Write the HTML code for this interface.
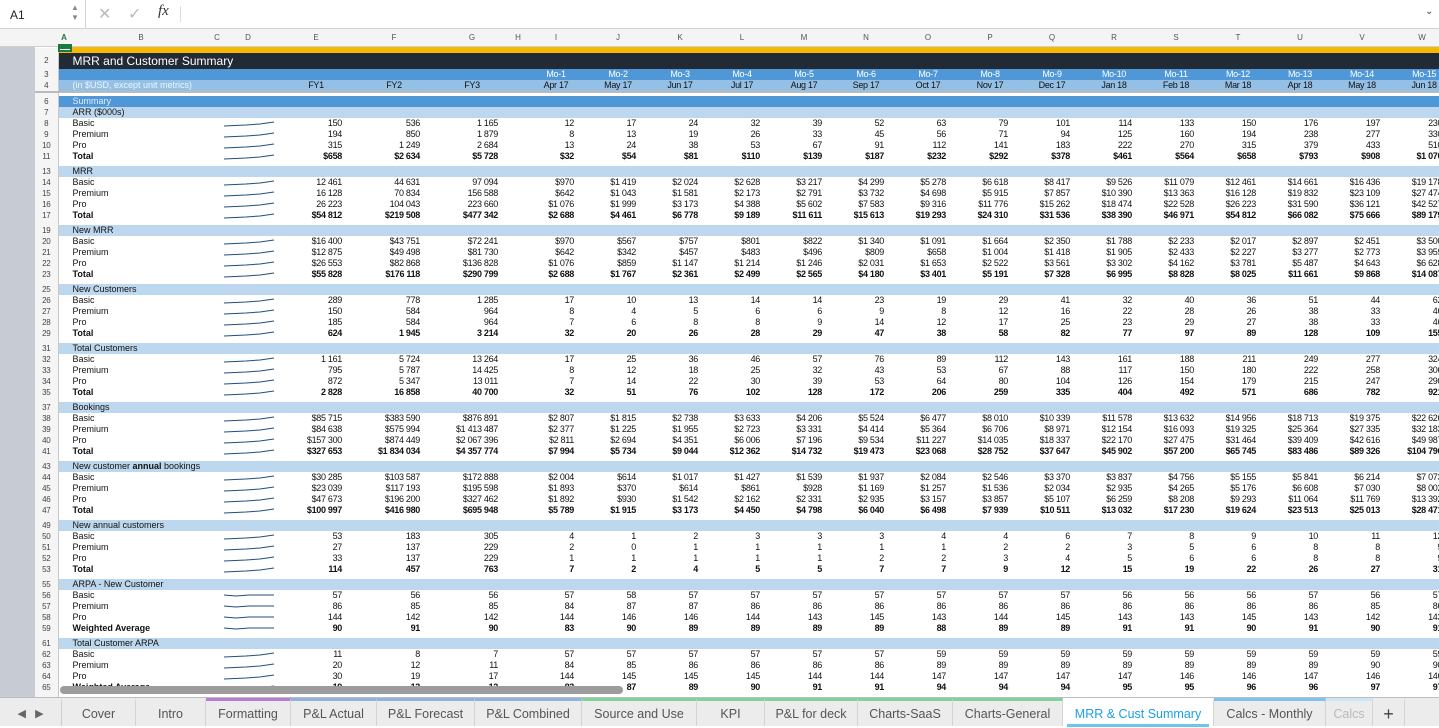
<!DOCTYPE html>
<html><head><meta charset="utf-8"><style>
*{margin:0;padding:0;box-sizing:border-box}
body{width:1439px;height:726px;overflow:hidden;background:#fff;font-family:"Liberation Sans",sans-serif;position:relative}
#fb{position:absolute;left:0;top:0;width:1439px;height:29px;background:#fff;border-bottom:1px solid #d4d4d4}
#nb{position:absolute;left:0;top:0;width:86px;height:28px;border-right:1px solid #d4d4d4;font-size:12px;padding:8px 0 0 10px;color:#222}
#ch{position:absolute;left:0;top:29px;width:1439px;height:18px;background:#f4f4f4;border-bottom:1px solid #d0d0d0}
#ch span{position:absolute;top:4px;font-size:8px;color:#555;transform:translateX(-50%)}
#out{position:absolute;left:0;top:29px;width:35px;height:669px;background:#c6cbd4}
#grid{position:absolute;left:35px;top:47px;width:1404px;height:651px;overflow:hidden}
table{border-collapse:collapse;table-layout:fixed;width:1420px}
td,th{padding:0;font-size:9px;line-height:11px;height:11px;white-space:nowrap;overflow:visible;color:#111;letter-spacing:-.3px}
th{background:#f5f5f5;border-right:1px solid #c8c8c8;font-weight:normal;color:#444;text-align:center;font-size:8px;overflow:hidden}
td{text-align:right;padding-right:13px}
td.l{text-align:left;padding-left:14px;padding-right:0;letter-spacing:0}
tr.t td{font-weight:bold}
tr.s td{background:#bdd7ee}
tr.g td,tr.g th{height:4px;line-height:4px;font-size:0}
svg.sp{width:50px;height:9px;margin-left:-6px;display:block;fill:none;stroke:#1f4e79;stroke-width:1}
#tabs{position:absolute;left:0;top:697px;width:1439px;height:29px;background:#ececec;border-top:1px solid #bdbdbd}
#tabs div{position:absolute;top:0;height:28px;font-size:12.5px;color:#555;text-align:center;line-height:27px;border-right:1px solid #d4d4d4;border-top:3px solid transparent}
</style></head><body>
<div id="fb"><div id="nb">A1</div>
<span style="position:absolute;left:71px;top:3px;font-size:8px;color:#888;line-height:10px">▲<br>▼</span>
<span style="position:absolute;left:98px;top:4px;font-size:16px;color:#bbb">✕</span>
<span style="position:absolute;left:128px;top:4px;font-size:16px;color:#bbb">✓</span>
<span style="position:absolute;left:158px;top:3px;font-size:15px;color:#333;font-style:italic;font-family:'Liberation Serif',serif">fx</span>
<span style="position:absolute;left:180px;top:6px;width:1px;height:16px;background:#ddd"></span>
<span style="position:absolute;left:1425px;top:6px;font-size:10px;color:#444">⌄</span></div>
<div id="out"><span style="position:absolute;left:3px;top:4px;font-size:8px;background:#eee;border:1px solid #999;padding:0 1px;letter-spacing:1px;color:#222">1 2 3</span></div>
<div id="ch">
<span style="left:64px;color:#1b7a3e;font-weight:bold">A</span><span style="left:141px">B</span><span style="left:217px">C</span><span style="left:248px">D</span><span style="left:316px">E</span><span style="left:394px">F</span><span style="left:472px">G</span><span style="left:518px">H</span><span style="left:556px">I</span><span style="left:618px">J</span><span style="left:680px">K</span><span style="left:742px">L</span><span style="left:804px">M</span><span style="left:866px">N</span><span style="left:928px">O</span><span style="left:990px">P</span><span style="left:1052px">Q</span><span style="left:1114px">R</span><span style="left:1176px">S</span><span style="left:1238px">T</span><span style="left:1300px">U</span><span style="left:1362px">V</span><span style="left:1422px">W</span>
<i style="position:absolute;left:58px;top:15px;width:14px;height:3px;background:#1b7a3e"></i>
</div>
<div id="grid"><table>
<colgroup><col style="width:23px"><col style="width:14px"><col style="width:137px"><col style="width:21px"><col style="width:47px"><col style="width:78px"><col style="width:78px"><col style="width:78px"><col style="width:14px"><col span="15" style="width:62px"></colgroup>
<tr style="height:5px"><th style="height:5px"></th><td colspan="23" style="height:5px;background:#f6b800;border-top:1px solid #f6b800"></td></tr>
<tr><th style="height:16px">2</th><td class="l" colspan="23" style="height:16px;background:#222a35;color:#fff;font-size:12px;line-height:16px">MRR and Customer Summary</td></tr>
<tr style="background:#4f97d7"><th style="background:#f5f5f5">3</th><td colspan="8"></td><td style="text-align:center;padding:0;color:#fff">Mo-1</td><td style="text-align:center;padding:0;color:#fff">Mo-2</td><td style="text-align:center;padding:0;color:#fff">Mo-3</td><td style="text-align:center;padding:0;color:#fff">Mo-4</td><td style="text-align:center;padding:0;color:#fff">Mo-5</td><td style="text-align:center;padding:0;color:#fff">Mo-6</td><td style="text-align:center;padding:0;color:#fff">Mo-7</td><td style="text-align:center;padding:0;color:#fff">Mo-8</td><td style="text-align:center;padding:0;color:#fff">Mo-9</td><td style="text-align:center;padding:0;color:#fff">Mo-10</td><td style="text-align:center;padding:0;color:#fff">Mo-11</td><td style="text-align:center;padding:0;color:#fff">Mo-12</td><td style="text-align:center;padding:0;color:#fff">Mo-13</td><td style="text-align:center;padding:0;color:#fff">Mo-14</td><td style="text-align:center;padding:0;color:#fff">Mo-15</td></tr>
<tr style="background:#95c0e6;border-bottom:2px solid #bbb"><th style="background:#f5f5f5;height:12px">4</th><td class="l" colspan="3" style="color:#eef5fc;height:12px">(in $USD, except unit metrics)</td><td></td><td style="text-align:center;padding:0">FY1</td><td style="text-align:center;padding:0">FY2</td><td style="text-align:center;padding:0">FY3</td><td></td><td style="text-align:center;padding:0">Apr 17</td><td style="text-align:center;padding:0">May 17</td><td style="text-align:center;padding:0">Jun 17</td><td style="text-align:center;padding:0">Jul 17</td><td style="text-align:center;padding:0">Aug 17</td><td style="text-align:center;padding:0">Sep 17</td><td style="text-align:center;padding:0">Oct 17</td><td style="text-align:center;padding:0">Nov 17</td><td style="text-align:center;padding:0">Dec 17</td><td style="text-align:center;padding:0">Jan 18</td><td style="text-align:center;padding:0">Feb 18</td><td style="text-align:center;padding:0">Mar 18</td><td style="text-align:center;padding:0">Apr 18</td><td style="text-align:center;padding:0">May 18</td><td style="text-align:center;padding:0">Jun 18</td></tr>
<tr class="g"><th></th><td colspan="23"></td></tr>
<tr><th>6</th><td class="l" colspan="23" style="background:#4f97d7;color:#e4eef8">Summary</td></tr>
<tr class="s"><th>7</th><td class="l" colspan="23">ARR ($000s)</td></tr>
<tr><th>8</th><td class="l" colspan="3">Basic</td><td><svg class="sp"><path d="M0 7L22 6L36 5L50 3"/></svg></td><td>150</td><td>536</td><td>1 165</td><td></td><td>12</td><td>17</td><td>24</td><td>32</td><td>39</td><td>52</td><td>63</td><td>79</td><td>101</td><td>114</td><td>133</td><td>150</td><td>176</td><td>197</td><td>230</td></tr>
<tr><th>9</th><td class="l" colspan="3">Premium</td><td><svg class="sp"><path d="M0 7L22 6L36 5L50 3"/></svg></td><td>194</td><td>850</td><td>1 879</td><td></td><td>8</td><td>13</td><td>19</td><td>26</td><td>33</td><td>45</td><td>56</td><td>71</td><td>94</td><td>125</td><td>160</td><td>194</td><td>238</td><td>277</td><td>330</td></tr>
<tr><th>10</th><td class="l" colspan="3">Pro</td><td><svg class="sp"><path d="M0 7L22 6L36 5L50 3"/></svg></td><td>315</td><td>1 249</td><td>2 684</td><td></td><td>13</td><td>24</td><td>38</td><td>53</td><td>67</td><td>91</td><td>112</td><td>141</td><td>183</td><td>222</td><td>270</td><td>315</td><td>379</td><td>433</td><td>510</td></tr>
<tr class="t"><th>11</th><td class="l" colspan="3">Total</td><td><svg class="sp"><path d="M0 7L22 6L36 5L50 3"/></svg></td><td>$658</td><td>$2 634</td><td>$5 728</td><td></td><td>$32</td><td>$54</td><td>$81</td><td>$110</td><td>$139</td><td>$187</td><td>$232</td><td>$292</td><td>$378</td><td>$461</td><td>$564</td><td>$658</td><td>$793</td><td>$908</td><td>$1 070</td></tr>
<tr class="g"><th></th><td colspan="23"></td></tr>
<tr class="s"><th>13</th><td class="l" colspan="23">MRR</td></tr>
<tr><th>14</th><td class="l" colspan="3">Basic</td><td><svg class="sp"><path d="M0 7L22 6L36 5L50 3"/></svg></td><td>12 461</td><td>44 631</td><td>97 094</td><td></td><td>$970</td><td>$1 419</td><td>$2 024</td><td>$2 628</td><td>$3 217</td><td>$4 299</td><td>$5 278</td><td>$6 618</td><td>$8 417</td><td>$9 526</td><td>$11 079</td><td>$12 461</td><td>$14 661</td><td>$16 436</td><td>$19 178</td></tr>
<tr><th>15</th><td class="l" colspan="3">Premium</td><td><svg class="sp"><path d="M0 7L22 6L36 5L50 3"/></svg></td><td>16 128</td><td>70 834</td><td>156 588</td><td></td><td>$642</td><td>$1 043</td><td>$1 581</td><td>$2 173</td><td>$2 791</td><td>$3 732</td><td>$4 698</td><td>$5 915</td><td>$7 857</td><td>$10 390</td><td>$13 363</td><td>$16 128</td><td>$19 832</td><td>$23 109</td><td>$27 474</td></tr>
<tr><th>16</th><td class="l" colspan="3">Pro</td><td><svg class="sp"><path d="M0 7L22 6L36 5L50 3"/></svg></td><td>26 223</td><td>104 043</td><td>223 660</td><td></td><td>$1 076</td><td>$1 999</td><td>$3 173</td><td>$4 388</td><td>$5 602</td><td>$7 583</td><td>$9 316</td><td>$11 776</td><td>$15 262</td><td>$18 474</td><td>$22 528</td><td>$26 223</td><td>$31 590</td><td>$36 121</td><td>$42 527</td></tr>
<tr class="t"><th>17</th><td class="l" colspan="3">Total</td><td><svg class="sp"><path d="M0 7L22 6L36 5L50 3"/></svg></td><td>$54 812</td><td>$219 508</td><td>$477 342</td><td></td><td>$2 688</td><td>$4 461</td><td>$6 778</td><td>$9 189</td><td>$11 611</td><td>$15 613</td><td>$19 293</td><td>$24 310</td><td>$31 536</td><td>$38 390</td><td>$46 971</td><td>$54 812</td><td>$66 082</td><td>$75 666</td><td>$89 179</td></tr>
<tr class="g"><th></th><td colspan="23"></td></tr>
<tr class="s"><th>19</th><td class="l" colspan="23">New MRR</td></tr>
<tr><th>20</th><td class="l" colspan="3">Basic</td><td><svg class="sp"><path d="M0 7L22 6L36 5L50 3"/></svg></td><td>$16 400</td><td>$43 751</td><td>$72 241</td><td></td><td>$970</td><td>$567</td><td>$757</td><td>$801</td><td>$822</td><td>$1 340</td><td>$1 091</td><td>$1 664</td><td>$2 350</td><td>$1 788</td><td>$2 233</td><td>$2 017</td><td>$2 897</td><td>$2 451</td><td>$3 500</td></tr>
<tr><th>21</th><td class="l" colspan="3">Premium</td><td><svg class="sp"><path d="M0 7L22 6L36 5L50 3"/></svg></td><td>$12 875</td><td>$49 498</td><td>$81 730</td><td></td><td>$642</td><td>$342</td><td>$457</td><td>$483</td><td>$496</td><td>$809</td><td>$658</td><td>$1 004</td><td>$1 418</td><td>$1 905</td><td>$2 433</td><td>$2 227</td><td>$3 277</td><td>$2 773</td><td>$3 959</td></tr>
<tr><th>22</th><td class="l" colspan="3">Pro</td><td><svg class="sp"><path d="M0 7L22 6L36 5L50 3"/></svg></td><td>$26 553</td><td>$82 868</td><td>$136 828</td><td></td><td>$1 076</td><td>$859</td><td>$1 147</td><td>$1 214</td><td>$1 246</td><td>$2 031</td><td>$1 653</td><td>$2 522</td><td>$3 561</td><td>$3 302</td><td>$4 162</td><td>$3 781</td><td>$5 487</td><td>$4 643</td><td>$6 628</td></tr>
<tr class="t"><th>23</th><td class="l" colspan="3">Total</td><td><svg class="sp"><path d="M0 7L22 6L36 5L50 3"/></svg></td><td>$55 828</td><td>$176 118</td><td>$290 799</td><td></td><td>$2 688</td><td>$1 767</td><td>$2 361</td><td>$2 499</td><td>$2 565</td><td>$4 180</td><td>$3 401</td><td>$5 191</td><td>$7 328</td><td>$6 995</td><td>$8 828</td><td>$8 025</td><td>$11 661</td><td>$9 868</td><td>$14 087</td></tr>
<tr class="g"><th></th><td colspan="23"></td></tr>
<tr class="s"><th>25</th><td class="l" colspan="23">New Customers</td></tr>
<tr><th>26</th><td class="l" colspan="3">Basic</td><td><svg class="sp"><path d="M0 7L22 6L36 5L50 3"/></svg></td><td>289</td><td>778</td><td>1 285</td><td></td><td>17</td><td>10</td><td>13</td><td>14</td><td>14</td><td>23</td><td>19</td><td>29</td><td>41</td><td>32</td><td>40</td><td>36</td><td>51</td><td>44</td><td>62</td></tr>
<tr><th>27</th><td class="l" colspan="3">Premium</td><td><svg class="sp"><path d="M0 7L22 6L36 5L50 3"/></svg></td><td>150</td><td>584</td><td>964</td><td></td><td>8</td><td>4</td><td>5</td><td>6</td><td>6</td><td>9</td><td>8</td><td>12</td><td>16</td><td>22</td><td>28</td><td>26</td><td>38</td><td>33</td><td>46</td></tr>
<tr><th>28</th><td class="l" colspan="3">Pro</td><td><svg class="sp"><path d="M0 7L22 6L36 5L50 3"/></svg></td><td>185</td><td>584</td><td>964</td><td></td><td>7</td><td>6</td><td>8</td><td>8</td><td>9</td><td>14</td><td>12</td><td>17</td><td>25</td><td>23</td><td>29</td><td>27</td><td>38</td><td>33</td><td>46</td></tr>
<tr class="t"><th>29</th><td class="l" colspan="3">Total</td><td><svg class="sp"><path d="M0 7L22 6L36 5L50 3"/></svg></td><td>624</td><td>1 945</td><td>3 214</td><td></td><td>32</td><td>20</td><td>26</td><td>28</td><td>29</td><td>47</td><td>38</td><td>58</td><td>82</td><td>77</td><td>97</td><td>89</td><td>128</td><td>109</td><td>155</td></tr>
<tr class="g"><th></th><td colspan="23"></td></tr>
<tr class="s"><th>31</th><td class="l" colspan="23">Total Customers</td></tr>
<tr><th>32</th><td class="l" colspan="3">Basic</td><td><svg class="sp"><path d="M0 7L22 6L36 5L50 3"/></svg></td><td>1 161</td><td>5 724</td><td>13 264</td><td></td><td>17</td><td>25</td><td>36</td><td>46</td><td>57</td><td>76</td><td>89</td><td>112</td><td>143</td><td>161</td><td>188</td><td>211</td><td>249</td><td>277</td><td>324</td></tr>
<tr><th>33</th><td class="l" colspan="3">Premium</td><td><svg class="sp"><path d="M0 7L22 6L36 5L50 3"/></svg></td><td>795</td><td>5 787</td><td>14 425</td><td></td><td>8</td><td>12</td><td>18</td><td>25</td><td>32</td><td>43</td><td>53</td><td>67</td><td>88</td><td>117</td><td>150</td><td>180</td><td>222</td><td>258</td><td>306</td></tr>
<tr><th>34</th><td class="l" colspan="3">Pro</td><td><svg class="sp"><path d="M0 7L22 6L36 5L50 3"/></svg></td><td>872</td><td>5 347</td><td>13 011</td><td></td><td>7</td><td>14</td><td>22</td><td>30</td><td>39</td><td>53</td><td>64</td><td>80</td><td>104</td><td>126</td><td>154</td><td>179</td><td>215</td><td>247</td><td>290</td></tr>
<tr class="t"><th>35</th><td class="l" colspan="3">Total</td><td><svg class="sp"><path d="M0 7L22 6L36 5L50 3"/></svg></td><td>2 828</td><td>16 858</td><td>40 700</td><td></td><td>32</td><td>51</td><td>76</td><td>102</td><td>128</td><td>172</td><td>206</td><td>259</td><td>335</td><td>404</td><td>492</td><td>571</td><td>686</td><td>782</td><td>921</td></tr>
<tr class="g"><th></th><td colspan="23"></td></tr>
<tr class="s"><th>37</th><td class="l" colspan="23">Bookings</td></tr>
<tr><th>38</th><td class="l" colspan="3">Basic</td><td><svg class="sp"><path d="M0 7L22 6L36 5L50 3"/></svg></td><td>$85 715</td><td>$383 590</td><td>$876 891</td><td></td><td>$2 807</td><td>$1 815</td><td>$2 738</td><td>$3 633</td><td>$4 206</td><td>$5 524</td><td>$6 477</td><td>$8 010</td><td>$10 339</td><td>$11 578</td><td>$13 632</td><td>$14 956</td><td>$18 713</td><td>$19 375</td><td>$22 626</td></tr>
<tr><th>39</th><td class="l" colspan="3">Premium</td><td><svg class="sp"><path d="M0 7L22 6L36 5L50 3"/></svg></td><td>$84 638</td><td>$575 994</td><td>$1 413 487</td><td></td><td>$2 377</td><td>$1 225</td><td>$1 955</td><td>$2 723</td><td>$3 331</td><td>$4 414</td><td>$5 364</td><td>$6 706</td><td>$8 971</td><td>$12 154</td><td>$16 093</td><td>$19 325</td><td>$25 364</td><td>$27 335</td><td>$32 183</td></tr>
<tr><th>40</th><td class="l" colspan="3">Pro</td><td><svg class="sp"><path d="M0 7L22 6L36 5L50 3"/></svg></td><td>$157 300</td><td>$874 449</td><td>$2 067 396</td><td></td><td>$2 811</td><td>$2 694</td><td>$4 351</td><td>$6 006</td><td>$7 196</td><td>$9 534</td><td>$11 227</td><td>$14 035</td><td>$18 337</td><td>$22 170</td><td>$27 475</td><td>$31 464</td><td>$39 409</td><td>$42 616</td><td>$49 987</td></tr>
<tr class="t"><th>41</th><td class="l" colspan="3">Total</td><td><svg class="sp"><path d="M0 7L22 6L36 5L50 3"/></svg></td><td>$327 653</td><td>$1 834 034</td><td>$4 357 774</td><td></td><td>$7 994</td><td>$5 734</td><td>$9 044</td><td>$12 362</td><td>$14 732</td><td>$19 473</td><td>$23 068</td><td>$28 752</td><td>$37 647</td><td>$45 902</td><td>$57 200</td><td>$65 745</td><td>$83 486</td><td>$89 326</td><td>$104 796</td></tr>
<tr class="g"><th></th><td colspan="23"></td></tr>
<tr class="s"><th>43</th><td class="l" colspan="23">New customer <b>annual</b> bookings</td></tr>
<tr><th>44</th><td class="l" colspan="3">Basic</td><td><svg class="sp"><path d="M0 7L22 6L36 5L50 3"/></svg></td><td>$30 285</td><td>$103 587</td><td>$172 888</td><td></td><td>$2 004</td><td>$614</td><td>$1 017</td><td>$1 427</td><td>$1 539</td><td>$1 937</td><td>$2 084</td><td>$2 546</td><td>$3 370</td><td>$3 837</td><td>$4 756</td><td>$5 155</td><td>$5 841</td><td>$6 214</td><td>$7 073</td></tr>
<tr><th>45</th><td class="l" colspan="3">Premium</td><td><svg class="sp"><path d="M0 7L22 6L36 5L50 3"/></svg></td><td>$23 039</td><td>$117 193</td><td>$195 598</td><td></td><td>$1 893</td><td>$370</td><td>$614</td><td>$861</td><td>$928</td><td>$1 169</td><td>$1 257</td><td>$1 536</td><td>$2 034</td><td>$2 935</td><td>$4 265</td><td>$5 176</td><td>$6 608</td><td>$7 030</td><td>$8 002</td></tr>
<tr><th>46</th><td class="l" colspan="3">Pro</td><td><svg class="sp"><path d="M0 7L22 6L36 5L50 3"/></svg></td><td>$47 673</td><td>$196 200</td><td>$327 462</td><td></td><td>$1 892</td><td>$930</td><td>$1 542</td><td>$2 162</td><td>$2 331</td><td>$2 935</td><td>$3 157</td><td>$3 857</td><td>$5 107</td><td>$6 259</td><td>$8 208</td><td>$9 293</td><td>$11 064</td><td>$11 769</td><td>$13 392</td></tr>
<tr class="t"><th>47</th><td class="l" colspan="3">Total</td><td><svg class="sp"><path d="M0 7L22 6L36 5L50 3"/></svg></td><td>$100 997</td><td>$416 980</td><td>$695 948</td><td></td><td>$5 789</td><td>$1 915</td><td>$3 173</td><td>$4 450</td><td>$4 798</td><td>$6 040</td><td>$6 498</td><td>$7 939</td><td>$10 511</td><td>$13 032</td><td>$17 230</td><td>$19 624</td><td>$23 513</td><td>$25 013</td><td>$28 471</td></tr>
<tr class="g"><th></th><td colspan="23"></td></tr>
<tr class="s"><th>49</th><td class="l" colspan="23">New annual customers</td></tr>
<tr><th>50</th><td class="l" colspan="3">Basic</td><td><svg class="sp"><path d="M0 7L22 6L36 5L50 3"/></svg></td><td>53</td><td>183</td><td>305</td><td></td><td>4</td><td>1</td><td>2</td><td>3</td><td>3</td><td>3</td><td>4</td><td>4</td><td>6</td><td>7</td><td>8</td><td>9</td><td>10</td><td>11</td><td>12</td></tr>
<tr><th>51</th><td class="l" colspan="3">Premium</td><td><svg class="sp"><path d="M0 7L22 6L36 5L50 3"/></svg></td><td>27</td><td>137</td><td>229</td><td></td><td>2</td><td>0</td><td>1</td><td>1</td><td>1</td><td>1</td><td>1</td><td>2</td><td>2</td><td>3</td><td>5</td><td>6</td><td>8</td><td>8</td><td>9</td></tr>
<tr><th>52</th><td class="l" colspan="3">Pro</td><td><svg class="sp"><path d="M0 7L22 6L36 5L50 3"/></svg></td><td>33</td><td>137</td><td>229</td><td></td><td>1</td><td>1</td><td>1</td><td>1</td><td>1</td><td>2</td><td>2</td><td>3</td><td>4</td><td>5</td><td>6</td><td>6</td><td>8</td><td>8</td><td>9</td></tr>
<tr class="t"><th>53</th><td class="l" colspan="3">Total</td><td><svg class="sp"><path d="M0 7L22 6L36 5L50 3"/></svg></td><td>114</td><td>457</td><td>763</td><td></td><td>7</td><td>2</td><td>4</td><td>5</td><td>5</td><td>7</td><td>7</td><td>9</td><td>12</td><td>15</td><td>19</td><td>22</td><td>26</td><td>27</td><td>31</td></tr>
<tr class="g"><th></th><td colspan="23"></td></tr>
<tr class="s"><th>55</th><td class="l" colspan="23">ARPA - New Customer</td></tr>
<tr><th>56</th><td class="l" colspan="3">Basic</td><td><svg class="sp"><path d="M0 4L12 5L25 4L38 4L50 4"/></svg></td><td>57</td><td>56</td><td>56</td><td></td><td>57</td><td>58</td><td>57</td><td>57</td><td>57</td><td>57</td><td>57</td><td>57</td><td>57</td><td>56</td><td>56</td><td>56</td><td>57</td><td>56</td><td>57</td></tr>
<tr><th>57</th><td class="l" colspan="3">Premium</td><td><svg class="sp"><path d="M0 4L12 5L25 4L38 4L50 4"/></svg></td><td>86</td><td>85</td><td>85</td><td></td><td>84</td><td>87</td><td>87</td><td>86</td><td>86</td><td>86</td><td>86</td><td>86</td><td>86</td><td>86</td><td>86</td><td>86</td><td>86</td><td>85</td><td>86</td></tr>
<tr><th>58</th><td class="l" colspan="3">Pro</td><td><svg class="sp"><path d="M0 4L12 5L25 4L38 4L50 4"/></svg></td><td>144</td><td>142</td><td>142</td><td></td><td>144</td><td>146</td><td>146</td><td>144</td><td>143</td><td>145</td><td>143</td><td>144</td><td>145</td><td>143</td><td>143</td><td>145</td><td>143</td><td>142</td><td>143</td></tr>
<tr class="t"><th>59</th><td class="l" colspan="3">Weighted Average</td><td><svg class="sp"><path d="M0 4L12 5L25 4L38 4L50 4"/></svg></td><td>90</td><td>91</td><td>90</td><td></td><td>83</td><td>90</td><td>89</td><td>89</td><td>89</td><td>89</td><td>88</td><td>89</td><td>89</td><td>91</td><td>91</td><td>90</td><td>91</td><td>90</td><td>91</td></tr>
<tr class="g"><th></th><td colspan="23"></td></tr>
<tr class="s"><th>61</th><td class="l" colspan="23">Total Customer ARPA</td></tr>
<tr><th>62</th><td class="l" colspan="3">Basic</td><td><svg class="sp"><path d="M0 7L22 6L36 5L50 3"/></svg></td><td>11</td><td>8</td><td>7</td><td></td><td>57</td><td>57</td><td>57</td><td>57</td><td>57</td><td>57</td><td>59</td><td>59</td><td>59</td><td>59</td><td>59</td><td>59</td><td>59</td><td>59</td><td>59</td></tr>
<tr><th>63</th><td class="l" colspan="3">Premium</td><td><svg class="sp"><path d="M0 7L22 6L36 5L50 3"/></svg></td><td>20</td><td>12</td><td>11</td><td></td><td>84</td><td>85</td><td>86</td><td>86</td><td>86</td><td>86</td><td>89</td><td>89</td><td>89</td><td>89</td><td>89</td><td>89</td><td>89</td><td>90</td><td>90</td></tr>
<tr><th>64</th><td class="l" colspan="3">Pro</td><td><svg class="sp"><path d="M0 7L22 6L36 5L50 3"/></svg></td><td>30</td><td>19</td><td>17</td><td></td><td>144</td><td>145</td><td>145</td><td>145</td><td>144</td><td>144</td><td>147</td><td>147</td><td>147</td><td>147</td><td>146</td><td>146</td><td>147</td><td>146</td><td>146</td></tr>
<tr class="t"><th>65</th><td class="l" colspan="3">Weighted Average</td><td><svg class="sp"><path d="M0 7L22 6L36 5L50 3"/></svg></td><td>19</td><td>13</td><td>12</td><td></td><td>83</td><td>87</td><td>89</td><td>90</td><td>91</td><td>91</td><td>94</td><td>94</td><td>94</td><td>95</td><td>95</td><td>96</td><td>96</td><td>97</td><td>97</td></tr>
<tr class="g"><th></th><td colspan="23"></td></tr>
<tr class="s"><th>67</th><td class="l" colspan="23">Customer Churn</td></tr>
</table></div>
<div style="position:absolute;left:58px;top:47px;width:14px;height:5px;border:2px solid #1b7a3e;background:#fff"></div>
<div style="position:absolute;left:60px;top:686px;width:563px;height:8px;border-radius:4px;background:#9c9c9c"></div>
<div id="tabs">
<div style="left:0;width:62px;border-right:1px solid #ccc;color:#666;font-size:11px">◀&nbsp;&nbsp;&nbsp;▶</div>
<div style="left:62px;width:74px">Cover</div>
<div style="left:136px;width:70px">Intro</div>
<div style="left:206px;width:85px;border-top-color:#b57ed0">Formatting</div>
<div style="left:291px;width:86px;border-top-color:#8fb3d9">P&amp;L Actual</div>
<div style="left:377px;width:98px;border-top-color:#8fb3d9">P&amp;L Forecast</div>
<div style="left:475px;width:107px;border-top-color:#8fb3d9">P&amp;L Combined</div>
<div style="left:582px;width:115px;border-top-color:#7fd39a">Source and Use</div>
<div style="left:697px;width:68px;border-top-color:#7fd39a">KPI</div>
<div style="left:765px;width:93px;border-top-color:#7fd39a">P&amp;L for deck</div>
<div style="left:858px;width:95px;border-top-color:#7fd39a">Charts-SaaS</div>
<div style="left:953px;width:110px;border-top-color:#7fd39a">Charts-General</div>
<div style="left:1063px;width:151px;background:#fff;color:#1a9ee8;border-top-color:#fff"><span style="border-bottom:3px solid #6cc4f0;padding:0 8px 3px">MRR &amp; Cust Summary</span></div>
<div style="left:1214px;width:112px;border-top-color:#7cc3ee">Calcs - Monthly</div>
<div style="left:1326px;width:47px;color:#bbb;border-top-color:#cde6f7">Calcs</div>
<div style="left:1373px;width:32px;font-size:18px;color:#444">+</div>
</div>
</body></html>
